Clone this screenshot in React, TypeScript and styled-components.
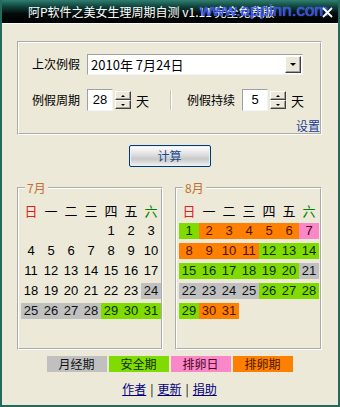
import React from 'react';
import styled, { createGlobalStyle } from 'styled-components';

const CJK = `'Noto Sans CJK SC', 'Noto Sans', sans-serif`;
const NUM = `'Liberation Sans', 'Noto Sans CJK SC', sans-serif`;

const GlobalStyle = createGlobalStyle`
  html, body {
    margin: 0;
    padding: 0;
    background: #ECE9D8;
  }
  body {
    width: 340px;
    height: 407px;
    overflow: hidden;
    font-family: ${CJK};
  }
`;

type Kind = 'period' | 'safe' | 'ovulation' | 'fertile' | undefined;

const kindBg: Record<string, string> = {
  period: '#C0C0C0',
  safe: '#80DC00',
  ovulation: '#FA88C8',
  fertile: '#FF8000',
};

const kindText: Record<string, string> = {
  period: '#111111',
  safe: '#0c2c00',
  ovulation: '#4a0020',
  fertile: '#4a1400',
};

const Window = styled.div`
  width: 340px;
  height: 407px;
  box-sizing: border-box;
  display: flex;
  flex-direction: column;
  background: #ECE9D8;
  border: 2px solid #23695C;
  border-top: 0;
`;

const TitleBar = styled.div`
  position: relative;
  flex: none;
  height: 23px;
  display: flex;
  align-items: center;
  padding-left: 26px;
  background: linear-gradient(#2f7f70 0%, #10403a 30%, #030a09 60%, #000 100%);
  color: #fff;
  font: 12px/14px ${CJK};
  border-bottom: 1px solid #fbfaf5;
`;

const Watermark = styled.span`
  position: absolute;
  left: 198px;
  top: 2px;
  font: 17px/18px ${NUM};
  color: #3050ff;
  opacity: 0.9;
  text-shadow: 0 0 1px #9fb4ff;
`;

const CloseIcon = styled.svg`
  position: absolute;
  right: 5px;
  top: 7px;
`;

const Body = styled.div`
  flex: 1;
  display: flex;
  flex-direction: column;
  padding: 17px 16px 0 15px;
`;

const SettingsBox = styled.div`
  border: 2px groove #fff;
  padding: 10px 0 0 13px;
  display: flex;
  flex-direction: column;
`;

const FieldRow = styled.div<{ $top?: number }>`
  display: flex;
  align-items: center;
  height: 22px;
  margin-top: ${({ $top }) => $top ?? 0}px;
`;

const Label = styled.span`
  font: 12px/14px ${CJK};
  color: #000;
  margin-right: 7px;
`;

const Combo = styled.div`
  width: 216px;
  height: 21px;
  box-sizing: border-box;
  display: flex;
  align-items: center;
  background: #fff;
  border: 1px solid;
  border-color: #a0a0a0 #f4f4f4 #f4f4f4 #a0a0a0;
  padding: 0 1px 0 3px;
`;

const ComboText = styled.span`
  flex: 1;
  font: 13px/15px ${CJK};
  color: #000;
`;

const RaisedButton = styled.div`
  box-sizing: border-box;
  background: #ECE9D8;
  border: 1px solid;
  border-color: #fff #404040 #404040 #fff;
  box-shadow: inset -1px -1px 0 #a0a0a0;
  display: flex;
  align-items: center;
  justify-content: center;
`;

const DropButton = styled(RaisedButton)`
  width: 16px;
  height: 17px;
`;

const Arrow = styled.span<{ $up?: boolean; $size: number }>`
  width: 0;
  height: 0;
  border-left: ${({ $size }) => $size}px solid transparent;
  border-right: ${({ $size }) => $size}px solid transparent;
  ${({ $up, $size }) =>
    $up
      ? `border-bottom: ${Math.ceil($size * 0.75)}px solid #000;`
      : `border-top: ${Math.ceil($size * 0.75)}px solid #000;`}
`;

const SpinInput = styled.div`
  width: 26px;
  height: 22px;
  box-sizing: border-box;
  background: #fff;
  border: 1px solid;
  border-color: #a0a0a0 #f4f4f4 #f4f4f4 #a0a0a0;
  font: 13px/20px ${NUM};
  text-align: center;
  margin-right: 2px;
`;

const Spinner = styled.div`
  width: 16px;
  height: 18px;
  display: flex;
  flex-direction: column;
  margin-right: 5px;
`;

const SpinHalf = styled(RaisedButton)`
  flex: 1;
`;

const Unit = styled.span`
  font: 13px/15px ${CJK};
  color: #000;
`;

const Divider = styled.span`
  width: 1px;
  height: 20px;
  background: #c8c4b4;
  border-right: 1px solid #fff;
  margin: 0 15px 0 21px;
`;

const SettingLink = styled.span`
  align-self: flex-end;
  margin-top: 8px;
  font: 12px/14px ${CJK};
  color: #1a3a9a;
`;

const CalcButton = styled.div`
  align-self: center;
  width: 82px;
  height: 22px;
  box-sizing: border-box;
  margin-top: 10px;
  border: 1px solid #003c74;
  border-radius: 2px;
  background: linear-gradient(#ffffff 0%, #e6e6e6 35%, #c9c9c9 65%, #f2f2f2 100%);
  box-shadow: inset 0 0 0 1px #e8f0fa;
  font: 12px/20px ${CJK};
  color: #1a4a8a;
  text-align: center;
`;

const Calendars = styled.div`
  display: flex;
  gap: 12px;
  margin-top: 14px;
`;

const MonthBox = styled.fieldset<{ $width: number }>`
  margin: 0;
  width: ${({ $width }) => $width}px;
  box-sizing: border-box;
  border: 2px groove #fff;
  padding: 8px 1px 9px 2px;
  min-width: 0;
`;

const MonthTitle = styled.legend`
  margin-left: 4px;
  padding: 0 2px;
  font: 12px/14px ${CJK};
  color: #c07030;
`;

const DayGrid = styled.div`
  display: grid;
  grid-template-columns: repeat(7, 20px);
  grid-auto-rows: 16px;
  grid-template-rows: repeat(7, 16px);
  row-gap: 4px;
`;

const WeekHead = styled.span<{ $color: string }>`
  font: 13px/16px ${CJK};
  color: ${({ $color }) => $color};
  text-align: center;
`;

const DayCell = styled.span<{ $kind: Kind }>`
  font: 13px/16px ${NUM};
  text-align: center;
  background: ${({ $kind }) => ($kind ? kindBg[$kind] : 'transparent')};
  color: ${({ $kind }) => ($kind ? kindText[$kind] : '#000')};
`;

const LegendRow = styled.div`
  display: flex;
  justify-content: center;
  gap: 2px;
  margin-top: 6px;
`;

const Chip = styled.span<{ $kind: Kind }>`
  width: 60px;
  height: 16px;
  font: 12px/16px ${CJK};
  text-align: center;
  background: ${({ $kind }) => ($kind ? kindBg[$kind] : 'transparent')};
  color: ${({ $kind }) => ($kind ? kindText[$kind] : '#000')};
`;

const Links = styled.div`
  display: flex;
  justify-content: center;
  gap: 4px;
  margin-top: 10px;
  font: 12px/14px ${CJK};
  color: #000;

  a {
    color: #000080;
    text-decoration: underline;
  }
`;

const weekNames = [
  { t: '日', c: '#e02020' },
  { t: '一', c: '#000' },
  { t: '二', c: '#000' },
  { t: '三', c: '#000' },
  { t: '四', c: '#000' },
  { t: '五', c: '#000' },
  { t: '六', c: '#008000' },
];

function markRange(map: Record<number, Kind>, from: number, to: number, kind: Kind) {
  for (let d = from; d <= to; d++) map[d] = kind;
}

const julyMarks: Record<number, Kind> = {};
markRange(julyMarks, 24, 28, 'period');
markRange(julyMarks, 29, 31, 'safe');

const augMarks: Record<number, Kind> = {};
markRange(augMarks, 1, 1, 'safe');
markRange(augMarks, 2, 6, 'fertile');
markRange(augMarks, 7, 7, 'ovulation');
markRange(augMarks, 8, 11, 'fertile');
markRange(augMarks, 12, 20, 'safe');
markRange(augMarks, 21, 25, 'period');
markRange(augMarks, 26, 29, 'safe');
markRange(augMarks, 30, 31, 'fertile');

function Month({ title, width, firstDay, days, marks, padRight }: {
  title: string;
  width: number;
  firstDay: number;
  days: number;
  marks: Record<number, Kind>;
  padRight: number;
}) {
  const cells: (number | null)[] = [];
  for (let i = 0; i < firstDay; i++) cells.push(null);
  for (let d = 1; d <= days; d++) cells.push(d);

  return (
    <MonthBox $width={width} style={{ paddingRight: padRight }}>
      <MonthTitle>{title}</MonthTitle>
      <DayGrid>
        {weekNames.map((w) => (
          <WeekHead key={w.t} $color={w.c}>{w.t}</WeekHead>
        ))}
        {cells.map((d, i) =>
          d === null
            ? <DayCell key={'e' + i} $kind={undefined} />
            : <DayCell key={d} $kind={marks[d]}>{d}</DayCell>
        )}
      </DayGrid>
    </MonthBox>
  );
}

function SpinButtons() {
  return (
    <Spinner>
      <SpinHalf><Arrow $up $size={2} /></SpinHalf>
      <SpinHalf><Arrow $size={2} /></SpinHalf>
    </Spinner>
  );
}

export default function App() {
  return (
    <>
      <GlobalStyle />
      <Window>
        <TitleBar>
          <span>阿P软件之美女生理周期自测 v1.11 完全免费版</span>
          <Watermark>www.appinn.com</Watermark>
          <CloseIcon width="11" height="11" viewBox="0 0 11 11">
            <path d="M1 1 L10 10 M10 1 L1 10" stroke="#fff" strokeWidth="1.8" />
          </CloseIcon>
        </TitleBar>
        <Body>
          <SettingsBox>
            <FieldRow>
              <Label>上次例假</Label>
              <Combo>
                <ComboText>2010年 7月24日</ComboText>
                <DropButton><Arrow $size={3} /></DropButton>
              </Combo>
            </FieldRow>
            <FieldRow $top={14}>
              <Label>例假周期</Label>
              <SpinInput>28</SpinInput>
              <SpinButtons />
              <Unit>天</Unit>
              <Divider />
              <Label>例假持续</Label>
              <SpinInput>5</SpinInput>
              <SpinButtons />
              <Unit>天</Unit>
            </FieldRow>
            <SettingLink>设置</SettingLink>
          </SettingsBox>

          <CalcButton>计算</CalcButton>

          <Calendars>
            <Month title="7月" width={146} firstDay={4} days={31} marks={julyMarks} padRight={0} />
            <Month title="8月" width={147} firstDay={0} days={31} marks={augMarks} padRight={1} />
          </Calendars>

          <LegendRow>
            <Chip $kind="period">月经期</Chip>
            <Chip $kind="safe">安全期</Chip>
            <Chip $kind="ovulation">排卵日</Chip>
            <Chip $kind="fertile">排卵期</Chip>
          </LegendRow>

          <Links>
            <a>作者</a>|<a>更新</a>|<a>捐助</a>
          </Links>
        </Body>
      </Window>
    </>
  );
}
